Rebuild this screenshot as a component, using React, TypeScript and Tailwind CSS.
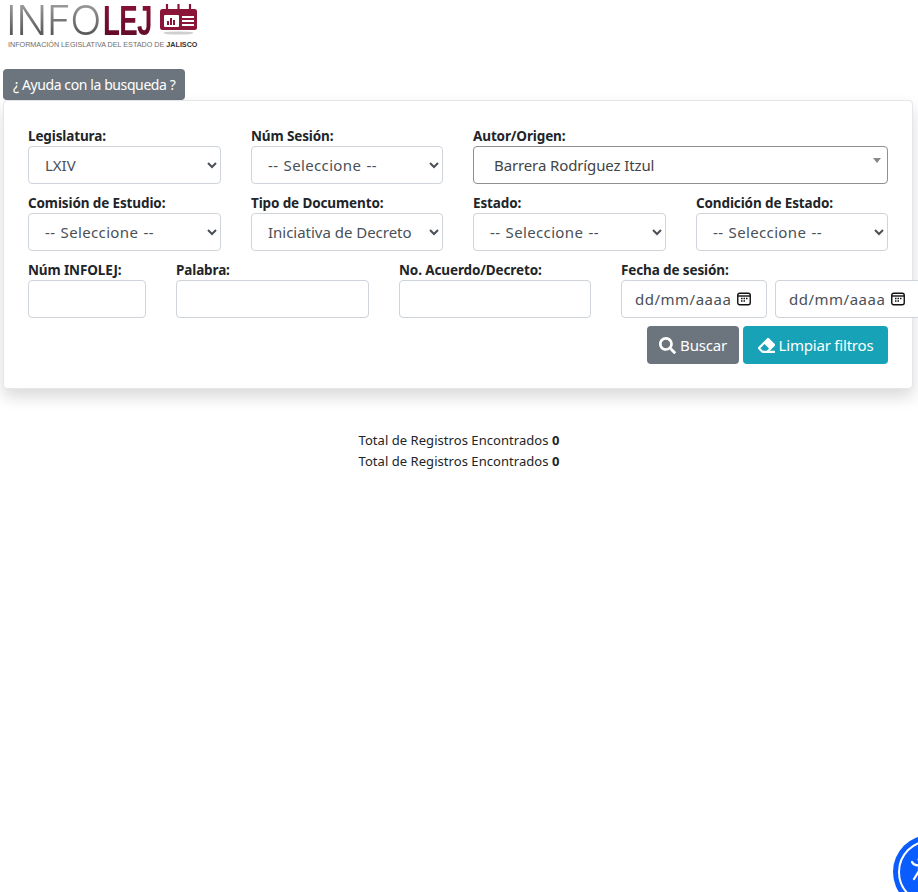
import React from "react";
import { FaSearch, FaEraser } from "react-icons/fa";

const font = "font-['Noto_Sans','Open_Sans',sans-serif]";

function Label({ children }: { children: React.ReactNode }) {
  return <label className="block h-[21px] text-[13.5px] font-bold leading-[22px] text-[#212529] tracking-[-0.12px] whitespace-nowrap">{children}</label>;
}

function Sel({ value, label }: { value: string; label: string }) {
  const placeholder = value.startsWith("--");
  return (
    <div>
      <Label>{label}</Label>
      <select
        defaultValue={value}
        className={
          placeholder
            ? "block h-[38px] w-full rounded-[4px] border border-[#ced4da] bg-white pl-[12px] pr-[8px] text-[15px] tracking-[0.35px] [word-spacing:1px] text-[#495057]"
            : "block h-[38px] w-full rounded-[4px] border border-[#ced4da] bg-white pl-[12px] pr-[8px] text-[15px] tracking-[-0.02px] text-[#495057]"
        }
      >
        <option>{value}</option>
      </select>
    </div>
  );
}

function Cal() {
  return (
    <svg width="14" height="14" viewBox="0 0 14 14" fill="none" className="shrink-0">
      <rect x="0.75" y="1.25" width="12.5" height="11.5" rx="2" stroke="#111" strokeWidth="1.4" />
      <path d="M1 4h12" stroke="#111" strokeWidth="1.4" />
      <path d="M4 6.5h1.5M6.5 6.5H8M9 6.5h1.5M4 9h1.5M6.5 9H8" stroke="#111" strokeWidth="1.3" />
    </svg>
  );
}

function DateBox() {
  return (
    <div className="flex h-[38px] w-[146px] shrink-0 items-center justify-between rounded-[4px] border border-[#ced4da] bg-white pl-[13px] pr-[15px] text-[15px] text-[#495057]">
      <span className="tracking-[0.5px]">dd/mm/aaaa</span>
      <Cal />
    </div>
  );
}

function TextBox({ label, w }: { label: string; w?: string }) {
  return (
    <div className={w}>
      <Label>{label}</Label>
      <input type="text" aria-label={label} className="block h-[38px] w-full rounded-[4px] border border-[#ced4da] bg-white" />
    </div>
  );
}

function Logo() {
  return (
    <div className="flex h-[69px] flex-col pl-[6px]">
      <div className="flex h-[40px] items-start">
        <span className="block w-[97px] font-['Inter',sans-serif] text-[41px] font-light leading-[41px] tracking-[-0.6px] bg-gradient-to-b from-[#a5a5a5] to-[#4a4a4a] bg-clip-text text-transparent">INFO</span>
        <span className="block w-[57px] shrink-0">
          <span className="block w-[80px] origin-left scale-x-[0.66] whitespace-nowrap font-['Liberation_Sans',sans-serif] text-[42px] font-bold leading-[41px] tracking-[-1px] bg-gradient-to-b from-[#8c1238] to-[#5c0a24] bg-clip-text text-transparent">LEJ</span>
        </span>
        <svg width="37" height="32" viewBox="0 0 37 32" className="mt-[4px]">
          <ellipse cx="18.5" cy="29" rx="15" ry="1.6" fill="#cfcfcf" />
          <rect x="0" y="5" width="37" height="21" rx="2.5" fill="#8a1538" />
          <path d="M7 0.5v7M18.5 0.5v7M30 0.5v7" stroke="#8a1538" strokeWidth="2.2" strokeLinecap="round" />
          <rect x="4" y="11" width="15" height="12" rx="1" fill="#fff" />
          <path d="M7 21v-4h2v4zM10 21v-7h2v7zM13 21v-5h2v5z" fill="#8a1538" />
          <path d="M22 12h12v2H22zM22 16h12v2H22zM22 20h12v2H22z" fill="#fff" />
        </svg>
      </div>
      <div className="whitespace-nowrap pl-[2px] font-['Liberation_Sans',sans-serif] text-[7.2px] leading-[9px] text-[#6d6d6d]">
        INFORMACIÓN LEGISLATIVA DEL ESTADO DE <b className="text-[#333]">JALISCO</b>
      </div>
    </div>
  );
}

export default function App() {
  return (
    <div className={`relative h-[892px] w-[918px] overflow-hidden bg-white ${font}`}>
      <Logo />
      <button className="ml-[3px] block h-[31px] rounded-[4px] bg-[#6c757d] px-[10px] text-[14px] tracking-[-0.4px] text-white">¿ Ayuda con la busqueda ?</button>
      <div className="ml-[3px] h-[289px] w-[910px] rounded-[4px] border border-[#e3e6ea] bg-white px-[24px] pt-[24px] shadow-[0_8px_16px_rgba(0,0,0,0.15)]">
        <div className="grid grid-cols-[193px_192px_193px_192px] gap-x-[30px] gap-y-[8px]">
          <Sel label="Legislatura:" value="LXIV" />
          <Sel label="Núm Sesión:" value="-- Seleccione --" />
          <div className="col-span-2">
            <Label>Autor/Origen:</Label>
            <div className="relative flex h-[38px] items-center rounded-[4px] border border-[#8f8f8f] pl-[20px] text-[15px] tracking-[-0.12px] text-[#444]">
              Barrera Rodríguez Itzul
              <span className="absolute right-[6px] top-[11px] h-0 w-0 border-x-[4px] border-t-[5px] border-x-transparent border-t-[#888]" />
            </div>
          </div>
          <Sel label="Comisión de Estudio:" value="-- Seleccione --" />
          <Sel label="Tipo de Documento:" value="Iniciativa de Decreto" />
          <Sel label="Estado:" value="-- Seleccione --" />
          <Sel label="Condición de Estado:" value="-- Seleccione --" />
        </div>
        <div className="mt-[8px] flex gap-x-[30px]">
          <TextBox label="Núm INFOLEJ:" w="w-[118px] shrink-0" />
          <TextBox label="Palabra:" w="w-[193px] shrink-0" />
          <TextBox label="No. Acuerdo/Decreto:" w="w-[192px] shrink-0" />
          <div className="shrink-0">
            <Label>Fecha de sesión:</Label>
            <div className="flex gap-[8px]">
              <DateBox />
              <DateBox />
            </div>
          </div>
        </div>
        <div className="mt-[8px] flex w-[860px] justify-end gap-[4px]">
          <button className="flex h-[38px] w-[92px] items-center justify-center gap-[4px] rounded-[4px] bg-[#6c757d] text-[15px] tracking-[-0.2px] text-white">
            <FaSearch size={17} />Buscar
          </button>
          <button className="flex h-[38px] w-[145px] items-center justify-center gap-[4px] rounded-[4px] bg-[#17a2b8] text-[15px] tracking-[-0.2px] text-white">
            <FaEraser size={17} />Limpiar filtros
          </button>
        </div>
      </div>
      <div className="mt-[41px] text-center text-[13px] leading-[21px] tracking-[0.05px] text-[#212529]">
        <p>Total de Registros Encontrados <b>0</b></p>
        <p>Total de Registros Encontrados <b>0</b></p>
      </div>
      <div className="absolute left-[893px] top-[835px] flex h-[74px] w-[74px] items-center justify-center rounded-full bg-[#0a5cff]">
        <div className="h-[64px] w-[64px] rounded-full border-2 border-white">
          <svg width="16" height="24" viewBox="0 0 16 24" className="ml-[11px] mt-[16px]" fill="none" stroke="#fff" strokeWidth="2.2" strokeLinecap="round">
            <circle cx="8" cy="1.5" r="1.5" fill="#fff" stroke="none" />
            <path d="M1 4c1.5 3 4 3.5 7 3.5s5.5-.5 7-3.5M8 8v5M8 13l-5 8M8 13l5 8" />
          </svg>
        </div>
      </div>
    </div>
  );
}
